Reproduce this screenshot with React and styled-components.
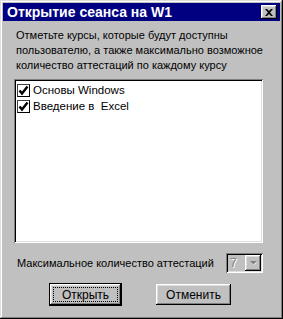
import React from "react";
import styled, { createGlobalStyle } from "styled-components";

const GlobalStyle = createGlobalStyle`
  html, body {
    margin: 0;
    padding: 0;
    background: #c0c0c0;
  }
  body {
    font-family: "Liberation Sans", Arial, sans-serif;
  }
`;

// --- рамки в стиле Win95 ---
const raised = `
  box-shadow:
    inset -1px -1px #000,
    inset 1px 1px #fff,
    inset -2px -2px #808080,
    inset 2px 2px #dfdfdf;
`;

const sunken = `
  box-shadow:
    inset 1px 1px #808080,
    inset -1px -1px #fff,
    inset 2px 2px #000,
    inset -2px -2px #dfdfdf;
`;

const Window = styled.div`
  width: 283px;
  height: 319px;
  box-sizing: border-box;
  padding: 3px;
  background: #c0c0c0;
  display: flex;
  flex-direction: column;
  box-shadow:
    inset -1px -1px #000,
    inset 1px 1px #dfdfdf,
    inset -2px -2px #808080,
    inset 2px 2px #fff;
`;

const TitleBar = styled.div`
  height: 18px;
  background: #000080;
  color: #fff;
  display: flex;
  align-items: center;
  justify-content: space-between;
  padding: 0 3px 0 4px;
  font-weight: bold;
  font-size: 14px;
`;

const CloseButton = styled.div`
  width: 16px;
  height: 14px;
  background: #c0c0c0;
  display: flex;
  align-items: center;
  justify-content: center;
  ${raised}
`;

const Body = styled.div`
  flex: 1;
  display: flex;
  flex-direction: column;
  padding: 7px 17px 0 11px;
  font-size: 11px;
  color: #000;
`;

const Hint = styled.div`
  padding-left: 2px;
  line-height: 15px;
  white-space: nowrap;
`;

const ListBox = styled.div`
  margin-top: 6px;
  height: 164px;
  background: #fff;
  padding: 3px 3px;
  box-sizing: border-box;
  ${sunken}
`;

const Item = styled.div`
  display: flex;
  align-items: center;
  height: 16px;
  white-space: pre;
  font-size: 11.5px;
`;

const CheckBox = styled.span`
  width: 13px;
  height: 13px;
  box-sizing: border-box;
  border: 1px solid #000;
  border-top-color: #404040;
  border-left-color: #404040;
  background: #fff;
  margin-right: 3px;
  display: flex;
  align-items: center;
  justify-content: center;
`;

const LimitRow = styled.div`
  margin-top: 10px;
  display: flex;
  align-items: center;
  justify-content: space-between;
  padding-left: 3px;
  height: 20px;
  font-size: 11px;
`;

const Combo = styled.div`
  flex-shrink: 0;
  width: 37px;
  height: 20px;
  box-sizing: border-box;
  padding: 2px;
  display: flex;
  background: #c0c0c0;
  ${sunken}
`;

const ComboValue = styled.span`
  flex: 1;
  color: #808080;
  text-shadow: 1px 1px #fff;
  padding-left: 2px;
  line-height: 16px;
  font-size: 12px;
`;

const ComboButton = styled.span`
  width: 16px;
  height: 16px;
  background: #c0c0c0;
  display: flex;
  align-items: center;
  justify-content: center;
  ${raised}
`;

const ButtonRow = styled.div`
  margin-top: 10px;
  display: flex;
  justify-content: center;
  gap: 34px;
  padding-left: 3px;
`;

const Button = styled.div`
  width: ${(p) => (p.$default ? 73 : 75)}px;
  height: ${(p) => (p.$default ? 23 : 21)}px;
  margin-top: ${(p) => (p.$default ? 0 : 1)}px;
  box-sizing: border-box;
  background: #c0c0c0;
  display: flex;
  align-items: center;
  justify-content: center;
  font-size: 12px;
  position: relative;
  border: ${(p) => (p.$default ? "1px solid #000" : "none")};
  ${raised}
`;

const FocusRing = styled.span`
  position: absolute;
  inset: 3px;
  border: 1px dotted #000;
`;

function Check() {
  return (
    <svg width="11" height="11" viewBox="0 0 11 11">
      <path d="M1.5 5.5 L4 8.5 L9.5 1.5" fill="none" stroke="#000" strokeWidth="2.4" />
    </svg>
  );
}

function App() {
  const courses = ["Основы Windows", "Введение в  Excel"];
  return (
    <>
      <GlobalStyle />
      <Window>
        <TitleBar>
          <span>Открытие сеанса на W1</span>
          <CloseButton>
            <svg width="8" height="7" viewBox="0 0 8 7">
              <path d="M0 0h2l2 2 2-2h2L5 3.5 8 7H6L4 5 2 7H0l3-3.5z" fill="#000" />
            </svg>
          </CloseButton>
        </TitleBar>
        <Body>
          <Hint>
            Отметьте курсы, которые будут доступны
            <br />
            пользователю, а также максимально возможное
            <br />
            количество аттестаций по каждому курсу
          </Hint>
          <ListBox>
            {courses.map((c) => (
              <Item key={c}>
                <CheckBox>
                  <Check />
                </CheckBox>
                {c}
              </Item>
            ))}
          </ListBox>
          <LimitRow>
            <span>Максимальное количество аттестаций</span>
            <Combo>
              <ComboValue>7</ComboValue>
              <ComboButton>
                <svg width="7" height="5" viewBox="0 0 7 5">
                  <path d="M1 1h6L4 4z" fill="#fff" />
                  <path d="M0 0h7L3.5 3.5z" fill="#808080" />
                </svg>
              </ComboButton>
            </Combo>
          </LimitRow>
          <ButtonRow>
            <Button $default>
              <FocusRing />
              Открыть
            </Button>
            <Button>Отменить</Button>
          </ButtonRow>
        </Body>
      </Window>
    </>
  );
}

export default App;
